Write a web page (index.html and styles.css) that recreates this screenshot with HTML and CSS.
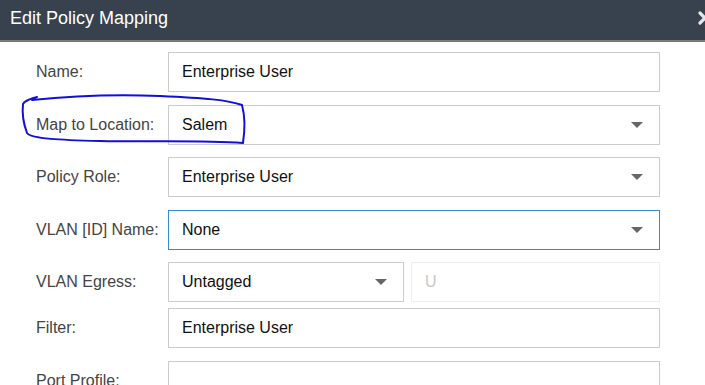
FILE: index.html
```html
<!DOCTYPE html>
<html lang="en">
<head>
    <meta charset="UTF-8">
    <title>Edit Policy Mapping</title>
    <link rel="stylesheet" href="styles.css">
</head>
<body>
<div class="dlg">
    <div class="hd">
        <span class="ttl">Edit Policy Mapping</span>
        <svg class="cls" width="14" height="14" viewBox="0 0 14 14">
            <path d="M2 2 L12 12 M12 2 L2 12" stroke="#e4e6ea" stroke-width="3.2" stroke-linecap="round"/>
        </svg>
    </div>

    <div class="frm">
        <div class="row">
            <label class="lbl">Name:</label>
            <input class="ipt" type="text" value="Enterprise User">
        </div>
        <div class="row">
            <label class="lbl">Map to Location:</label>
            <div class="sel"><span>Salem</span><i class="caret"></i></div>
        </div>
        <div class="row">
            <label class="lbl">Policy Role:</label>
            <div class="sel"><span>Enterprise User</span><i class="caret"></i></div>
        </div>
        <div class="row">
            <label class="lbl">VLAN [ID] Name:</label>
            <div class="sel focus"><span>None</span><i class="caret"></i></div>
        </div>
        <div class="row tight">
            <label class="lbl">VLAN Egress:</label>
            <div class="pair">
                <div class="sel short"><span>Untagged</span><i class="caret"></i></div>
                <input class="ipt off" type="text" placeholder="U" disabled>
            </div>
        </div>
        <div class="row">
            <label class="lbl">Filter:</label>
            <input class="ipt" type="text" value="Enterprise User">
        </div>
        <div class="row">
            <label class="lbl">Port Profile:</label>
            <input class="ipt" type="text" value="">
        </div>
    </div>

    <!-- hand drawn marker around the location row -->
    <svg class="mark" width="705" height="385" viewBox="0 0 705 385">
        <path d="M37 97 C31 99 25 100 23 104 C22 113 24 125 27 133 C31 139 62 140 100 141 C150 142 200 140 243 143 C245 130 245 116 242 105 C228 100 205 98 160 96 C110 94 70 96 32 100"
              fill="none" stroke="#1010d8" stroke-width="2" stroke-linecap="round" stroke-linejoin="round"/>
    </svg>
</div>
</body>
</html>
```

FILE: styles.css
```css
html, body {
    margin: 0;
    overflow: hidden;
    background: #fff;
}

.dlg {
    position: relative;
    width: 705px;
    height: 385px;
    font-family: "Liberation Sans", Arial, sans-serif;
}

.hd {
    height: 40px;
    background-color: #38424f;
    border-bottom: 2px solid #7a7a7a;
    display: flex;
    align-items: center;
    justify-content: space-between;
}

.ttl {
    color: #fff;
    font-size: 18px;
    line-height: 37px;
    height: 40px;
    padding-left: 10px;
}

.cls {
    margin-right: -7px;
    margin-top: -4px;
}

.frm {
    padding: 10px 45px 0 36px;
    display: flex;
    flex-direction: column;
    gap: 12.5px;
}

.row {
    display: flex;
    align-items: center;
    height: 40px;
}

.row.tight {
    margin-bottom: -6.5px;
}

.lbl {
    width: 132px;
    flex: none;
    font-size: 16px;
    color: #444;
}

.ipt, .sel {
    box-sizing: border-box;
    height: 40px;
    flex: 1;
    min-width: 0;
    border: 1px solid #cccccc;
    background: #fff;
    padding: 0 13px;
    font-family: "Liberation Sans", Arial, sans-serif;
    font-size: 16px;
    color: #111;
    outline: none;
    margin: 0;
}

.sel {
    display: flex;
    align-items: center;
    justify-content: space-between;
    padding-right: 16px;
}

.sel.focus {
    border-color: #3a87d2;
}

.caret {
    width: 0;
    height: 0;
    border-left: 6px solid transparent;
    border-right: 6px solid transparent;
    border-top: 6px solid #666;
}

.pair {
    flex: 1;
    display: flex;
    gap: 7px;
    height: 40px;
}

.sel.short {
    flex: none;
    width: 236px;
}

.ipt.off {
    border-color: #eeeeee;
    background: #fff;
}

.ipt.off::placeholder {
    color: #c8c8c8;
}

.mark {
    position: absolute;
    top: 0;
    left: 0;
    pointer-events: none;
}
```
